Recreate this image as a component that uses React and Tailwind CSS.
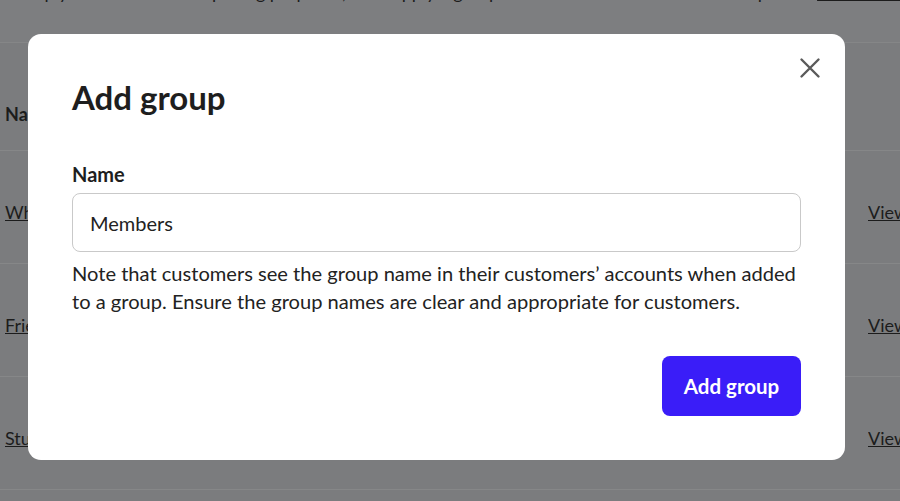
function CloseIcon() {
  return (
    <svg width="22" height="22" viewBox="0 0 22 22" fill="none">
      <path d="M2.5 2.5L19.5 19.5M19.5 2.5L2.5 19.5" stroke="#5a5a5a" strokeWidth="2.4" strokeLinecap="round" />
    </svg>
  );
}

const rows = ["Wholesale", "Friends and family", "Students"];

function App() {
  return (
    <div className="relative w-[900px] h-[501px] overflow-hidden bg-[#7b7c7e] text-[#1c1c1c] font-['Lato','Liberation_Sans',sans-serif]">
      {/* page behind the overlay */}
      <div className="h-[43px] overflow-hidden bg-[#7d7e80] border-b border-[#858687] px-[5px]">
        <p className="-mt-[22px] whitespace-nowrap text-[18px] leading-[28px]">
          Group your customers for pricing purposes, or to apply a group discount to the whole customer profile. <span className="underline">Learn more</span>
        </p>
      </div>
      <div className="mt-[36px]">
        <div className="h-[72px] flex items-center justify-between px-[5px] border-b border-[#868788]">
          <span className="text-[18px] font-bold">Name</span>
        </div>
        {rows.map((r) => (
          <div key={r} className="h-[113px] flex items-center justify-between pl-[5px] pt-[10px] border-b border-[#868788]">
            <span className="text-[18px] underline">{r}</span>
            <span className="text-[18px] underline w-[32px] overflow-hidden">View</span>
          </div>
        ))}
      </div>

      {/* modal */}
      <div className="absolute left-[28px] top-[34px] w-[817px] h-[426px] bg-white rounded-[13px] px-[44px] pt-[44px] pb-[44px] flex flex-col">
        <button className="absolute right-[24px] top-[23px] w-[22px] h-[22px] flex items-center justify-center">
          <CloseIcon />
        </button>
        <h2 className="text-[33px] leading-[38px] font-bold text-[#1e1e1e]">Add group</h2>
        <label className="mt-[46px] text-[20px] leading-[24px] font-bold text-[#1e1e1e]">Name</label>
        <div className="mt-[7px] h-[59px] rounded-[8px] border border-[#c9c9c9] flex items-center px-[17px]">
          <span className="text-[20px] text-[#222]">Members</span>
        </div>
        <p className="mt-[7px] whitespace-nowrap text-[20.1px] leading-[28px] text-[#222]">
          Note that customers see the group name in their customers’ accounts when added<br />to a group. Ensure the group names are clear and appropriate for customers.
        </p>
        <div className="mt-auto flex justify-end">
          <button className="w-[139px] h-[60px] rounded-[8px] bg-[#3a1df8] text-white text-[20.5px] font-bold">
            Add group
          </button>
        </div>
      </div>
    </div>
  );
}

export default App;
